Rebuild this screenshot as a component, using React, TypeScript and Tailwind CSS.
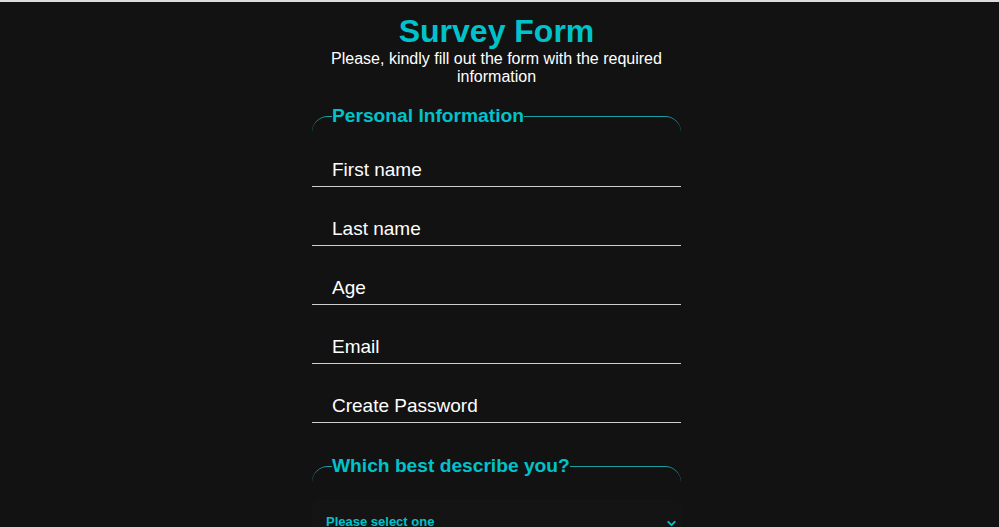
import React from 'react';
import { ChevronDown } from 'lucide-react';

const fields = ['First name', 'Last name', 'Age', 'Email', 'Create Password'];

export default function App() {
  return (
    <div className="min-h-screen bg-[#121212] font-['Liberation_Sans',Arial,sans-serif] overflow-hidden">
      <div className="h-[2px] bg-[#dcdcdc]" />
      <div className="flex justify-center pr-[6px]">
        <form className="w-[369px] flex flex-col" onSubmit={(e) => e.preventDefault()}>
          <h1 className="mt-[11px] text-center text-[32px] leading-[37px] font-bold text-[#00c2cb]">Survey Form</h1>
          <p className="mx-auto w-[340px] text-center text-[16px] leading-[18px] text-white">
            Please, kindly fill out the form with the required information
          </p>

          <fieldset className="mt-[19px] border-0 border-t border-[#1a9fa3] rounded-2xl">
            <legend className="ml-5 text-[19.2px] leading-[22px] font-bold text-[#00c2cb]">Personal Information</legend>
            <div className="flex flex-col gap-[22px] pt-[23px]">
              {fields.map((f) => (
                <input
                  key={f}
                  type={f === 'Create Password' ? 'password' : 'text'}
                  placeholder={f}
                  className="h-[37px] w-full bg-transparent border-0 border-b border-[#cfcfcf] pl-5 pt-[3px] text-[19px] text-white placeholder:text-white outline-none"
                />
              ))}
            </div>
          </fieldset>

          <fieldset className="mt-[32px] border-0 border-t border-[#1a9fa3] rounded-2xl">
            <legend className="ml-5 text-[19.2px] leading-[22px] font-bold text-[#00c2cb]">Which best describe you?</legend>
            <div className="mt-[23px] relative">
              <select className="appearance-none w-full h-[44px] bg-[#141414] rounded-md pl-[14px] text-[13px] leading-[16px] font-bold text-[#00c2cb] outline-none">
                <option>Please select one</option>
                <option>Student</option>
                <option>Full-time employee</option>
                <option>Other</option>
              </select>
              <ChevronDown size={13} strokeWidth={3.5} className="absolute right-[3px] top-[17px] text-[#00c2cb] pointer-events-none" />
            </div>
          </fieldset>
        </form>
      </div>
    </div>
  );
}
